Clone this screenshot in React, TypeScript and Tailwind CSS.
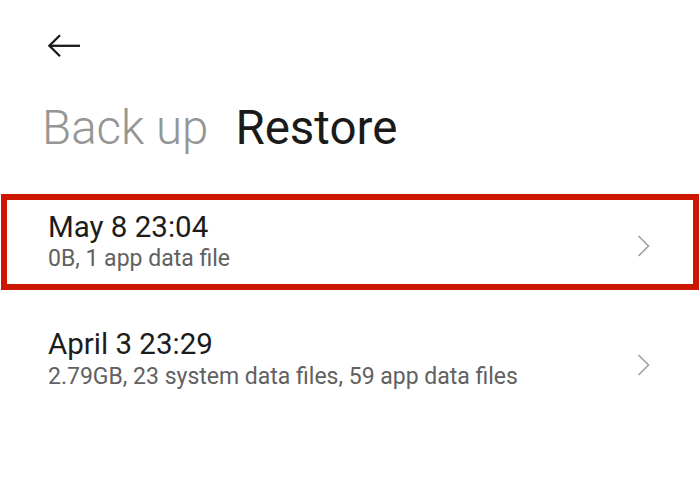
type Backup = {
  id: string;
  title: string;
  detail: string;
  selected?: boolean;
};

const backups: Backup[] = [
  { id: 'may', title: 'May 8 23:04', detail: '0B, 1 app data file', selected: true },
  { id: 'apr', title: 'April 3 23:29', detail: '2.79GB, 23 system data files, 59 app data files' },
];

export default function App() {
  return (
    <div className="min-h-[501px] w-[700px] bg-white font-['Roboto',sans-serif]">
      <div className="pl-[47px] pt-[34px]">
        <button type="button" className="block h-[24px] w-[34px] text-[#1a1a1a]">
          <svg className="block" width="34" height="24" viewBox="0 0 34 24" fill="none" stroke="currentColor" strokeWidth="2.3">
            <path d="M33 11.8H2.2" />
            <path d="M13 1.3 2.4 11.8 13 22.3" strokeLinejoin="miter" />
          </svg>
        </button>
      </div>

      <div className="mt-[43px] flex items-baseline pl-[42px] text-[47.5px] leading-[55px]">
        <span className="font-light text-[#959595]">Back up</span>
        <span className="ml-[27px] text-[#1a1a1a]">Restore</span>
      </div>

      <div className="mt-[38px] flex flex-col gap-[24px]">
        {backups.map((b) => (
          <BackupRow key={b.id} item={b} />
        ))}
      </div>
    </div>
  );
}

function BackupRow({ item }: { item: Backup }) {
  return (
    <div
      className={`mx-px flex h-[96px] items-start border-[6px] pl-[41px] pr-[43px] ${
        item.selected ? 'border-[#cc1600] pt-[10px]' : 'border-transparent pt-[7px]'
      }`}
    >
      <div className="flex-1">
        <div className="text-[29.5px] leading-[35px] text-[#1c1c1c]">{item.title}</div>
        <div className={`text-[23px] leading-[28px] text-[#616161] ${item.selected ? '' : 'mt-[1px]'}`}>
          {item.detail}
        </div>
      </div>
      <div className={`self-center ${item.selected ? '-mt-[3px]' : '-mt-[1px]'}`}>
        <svg className="block" width="13" height="22" viewBox="0 0 13 22" fill="none" stroke="#a3a3a3" strokeWidth="1.7">
          <path d="M1.5 1 11.5 11 1.5 21" />
        </svg>
      </div>
    </div>
  );
}
